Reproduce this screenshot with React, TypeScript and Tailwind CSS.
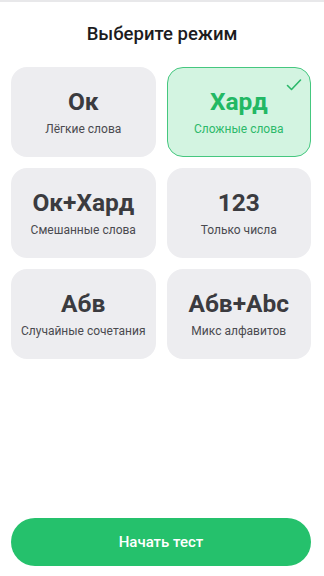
import { useState } from "react";

type Mode = {
  id: string
  title: string
  subtitle: string
}

const modes: Mode[] = [
  { id: "ok", title: "Ок", subtitle: "Лёгкие слова" },
  { id: "hard", title: "Хард", subtitle: "Сложные слова" },
  { id: "mixed", title: "Ок+Хард", subtitle: "Смешанные слова" },
  { id: "numbers", title: "123", subtitle: "Только числа" },
  { id: "random", title: "Абв", subtitle: "Случайные сочетания" },
  { id: "alphabets", title: "Абв+Abc", subtitle: "Микс алфавитов" },
];

export default function App() {
  const [selected, setSelected] = useState("hard");

  return (
    <div
      className="h-[576px] w-full flex flex-col bg-white"
      style={{ fontFamily: "Roboto, 'Noto Sans', sans-serif" }}
    >
      <div className="h-[2px] bg-[#e8e8ea]" />

      <h1 className="pt-[20px] text-center text-[18.5px] leading-6 font-medium text-[#1c1c1e]">
        Выберите режим
      </h1>

      <div className="grid grid-cols-2 gap-[11px] pl-[11px] pr-[13px] mt-[21px]">
        {modes.map((mode) => {
          const active = mode.id === selected;
          return (
            <button
              key={mode.id}
              onClick={() => setSelected(mode.id)}
              className={
                active
                  ? "relative h-[90px] rounded-2xl border-[1.5px] border-[#45c77f] bg-[#d3f4e1] flex flex-col items-center justify-center gap-[5px]"
                  : "relative h-[90px] rounded-2xl border-[1.5px] border-transparent bg-[#ededf0] flex flex-col items-center justify-center gap-[5px]"
              }
            >
              {active && (
                <svg
                  className="absolute top-[10px] right-[8px]"
                  width="16"
                  height="14"
                  viewBox="0 0 16 14"
                  fill="none"
                >
                  <path
                    d="M1.5 7.5 L5.5 11.5 L14.5 2"
                    stroke="#2bb86a"
                    strokeWidth="1.6"
                    strokeLinecap="round"
                    strokeLinejoin="round"
                  />
                </svg>
              )}
              <span
                className={
                  active
                    ? "text-[24.5px] leading-7 font-bold text-[#22b864]"
                    : "text-[24.5px] leading-7 font-bold text-[#3b3b3f]"
                }
              >
                {mode.title}
              </span>
              <span
                className={
                  active
                    ? "text-[12px] leading-4 text-[#2cb96a]"
                    : "text-[12px] leading-4 text-[#4a4a4f]"
                }
              >
                {mode.subtitle}
              </span>
            </button>
          );
        })}
      </div>

      <div className="flex-1" />

      <div className="pl-[11px] pr-[13px] pb-[10px]">
        <button className="w-full h-[48px] rounded-full bg-[#25c16c] text-white text-[15px] font-medium">
          Начать тест
        </button>
      </div>
    </div>
  );
}
